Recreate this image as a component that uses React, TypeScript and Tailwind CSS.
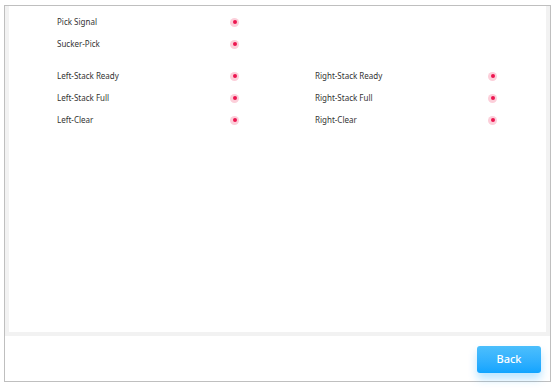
import React from 'react';

const leftRows = ['Pick Signal', 'Sucker-Pick'];
const stackRows = [
    ['Left-Stack Ready', 'Right-Stack Ready'],
    ['Left-Stack Full', 'Right-Stack Full'],
    ['Left-Clear', 'Right-Clear'],
];

const Dot = () => (
    <div className="w-[9px] h-[9px] rounded-full bg-[#fccfda] flex items-center justify-center">
        <div className="w-[4px] h-[4px] rounded-full bg-[#ec1650]"></div>
    </div>
);

const Signal = ({ label }: { label: string }) => (
    <div className="flex shrink-0 items-center h-[22px] w-[258px]">
        <span className="w-[173px] text-[8px] text-[#333]">{label}</span>
        <Dot />
    </div>
);

export default function App() {
    return (
        <div
            className="w-[555px] h-[389px] bg-white pt-[5px] pl-[4px]"
            style={{ fontFamily: '"Noto Sans", "Open Sans", sans-serif' }}
        >
            <div className="w-[547px] h-[377px] border border-[#bfbfbf] flex flex-col">
                <div className="h-[330px] bg-[#f2f2f2] px-[4px] pb-[4px]">
                    <div className="h-full bg-white pt-[5px] pl-[48px]">
                        {leftRows.map((r) => (
                            <Signal key={r} label={r} />
                        ))}
                        <div className="mt-[10px]">
                            {stackRows.map(([l, r]) => (
                                <div key={l} className="flex">
                                    <Signal label={l} />
                                    <Signal label={r} />
                                </div>
                            ))}
                        </div>
                    </div>
                </div>
                <div className="flex-1 flex justify-end items-start pt-[10px] pr-[9px]">
                    <button className="w-[64px] h-[27px] rounded-[3px] bg-gradient-to-b from-[#4cbffc] to-[#0ea4ff] text-white text-[11px] font-medium shadow-[0_6px_8px_rgba(30,170,255,0.3)]">
                        Back
                    </button>
                </div>
            </div>
        </div>
    );
}
